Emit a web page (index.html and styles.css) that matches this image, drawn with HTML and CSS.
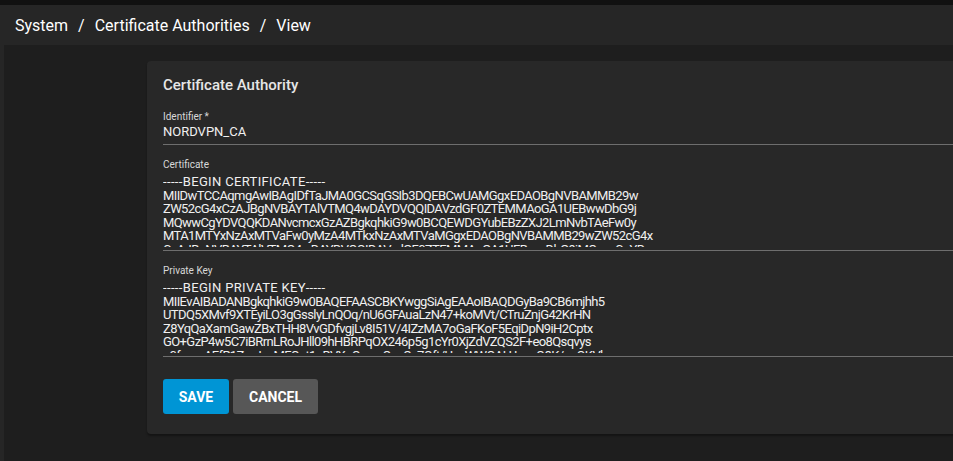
FILE: index.html
```html
<!DOCTYPE html>
<html>
<head>
<meta charset="utf-8">
<link rel="stylesheet" href="styles.css">
</head>
<body>
<div class="topstrip"></div>
<header class="header">
  <nav class="crumbs">
    <span>System</span><span class="sep">/</span><span>Certificate Authorities</span><span class="sep">/</span><span>View</span>
  </nav>
</header>
<div class="layout">
  <aside class="sidebar"></aside>
  <main class="main">
    <section class="card">
      <h1 class="title">Certificate Authority</h1>
      <div class="field">
        <div class="label">Identifier *</div>
        <div class="value">NORDVPN_CA</div>
      </div>
      <div class="field">
        <div class="label">Certificate</div>
        <div class="area"><span class="armor">-----BEGIN CERTIFICATE-----</span>
MIIDwTCCAqmgAwIBAgIDfTaJMA0GCSqGSIb3DQEBCwUAMGgxEDAOBgNVBAMMB29w
ZW52cG4xCzAJBgNVBAYTAlVTMQ4wDAYDVQQIDAVzdGF0ZTEMMAoGA1UEBwwDbG9j
MQwwCgYDVQQKDANvcmcxGzAZBgkqhkiG9w0BCQEWDGYubEBzZXJ2LmNvbTAeFw0y
MTA1MTYxNzAxMTVaFw0yMzA4MTkxNzAxMTVaMGgxEDAOBgNVBAMMB29wZW52cG4x
CzAJBgNVBAYTAlVTMQ4wDAYDVQQIDAVzdGF0ZTEMMAoGA1UEBwwDbG9jMQwwCgYD
VQQKDANvcmcxGzAZBgkqhkiG9w0BCQEWDGYubEBzZXJ2LmNvbTCCASIwDQYJKoZI</div>
      </div>
      <div class="field">
        <div class="label">Private Key</div>
        <div class="area"><span class="armor">-----BEGIN PRIVATE KEY-----</span>
MIIEvAIBADANBgkqhkiG9w0BAQEFAASCBKYwggSiAgEAAoIBAQDGyBa9CB6mjhh5
UTDQ5XMvf9XTEyiLO3gGsslyLnQOq/nU6GFAuaLzN47+koMVt/CTruZnjG42KrHN
Z8YqQaXamGawZBxTHH8VvGDfvgjLv8I51V/4IZzMA7oGaFKoF5EqiDpN9iH2Cptx
GO+GzP4w5C7iBRrnLRoJHll09hHBRPqOX246p5g1cYr0XjZdVZQS2F+eo8Qsqvys
a0fmnaAEfR1ZmJznMFOct1oBVXoQwoeQvnOv7Oft/UscWWQALUaepO8K/naOKVla
kQ2Bz7mS0Yp3LrT9cNwB4gX2uFhD8vJeA1sR6tKoZ+PqUiHjMbCdEfGyIl0nO5w</div>
      </div>
      <div class="actions">
        <button class="btn btn-primary">SAVE</button>
        <button class="btn btn-secondary">CANCEL</button>
      </div>
    </section>
  </main>
</div>
</body>
</html>
```
FILE: styles.css
```css
html, body {
  margin: 0;
  padding: 0;
  background: #1e1e1e;
  font-family: Roboto, "Liberation Sans", sans-serif;
  overflow: hidden;
  height: 100%;
}
.topstrip {
  height: 5px;
  background: #111111;
}
.header {
  height: 40px;
  background: #262626;
  display: flex;
  align-items: center;
  padding-left: 15px;
}
.crumbs {
  color: #ffffff;
  font-size: 16px;
  display: flex;
  align-items: center;
}
.crumbs .sep {
  margin: 0 10px 0 10px;
}
.layout {
  display: flex;
  height: 416px;
}
.sidebar {
  width: 4px;
  background: #262626;
  flex: none;
}
.main {
  flex: 1;
  padding: 16px 0 0 143px;
  min-width: 0;
}
.card {
  width: 900px;
  background: #282828;
  border-radius: 4px;
  padding: 14px 16px 20px 16px;
  box-shadow: 0 2px 2px rgba(0,0,0,0.35);
  display: flex;
  flex-direction: column;
}
.title {
  margin: 0;
  padding-bottom: 2px;
  font-size: 15px;
  font-weight: 500;
  line-height: 20px;
  color: #e6e6e6;
}
.field {
  margin-top: 14px;
  border-bottom: 1px solid #6e6e6e;
}
.label {
  font-size: 10px;
  line-height: 12px;
  color: #d8d8d8;
}
.value {
  font-size: 13px;
  line-height: 16px;
  color: #f0f0f0;
  padding: 1px 0 4px 0;
}
.area {
  font-size: 13px;
  letter-spacing: -0.6px;
  line-height: 13.5px;
  color: #f0f0f0;
  white-space: pre;
  overflow: hidden;
  height: 72px;
  margin: 4px 0 3px 0;
}
.armor {
  letter-spacing: 0.35px;
}
.actions {
  margin-top: 22px;
  display: flex;
  gap: 4px;
}
.btn {
  font-family: Roboto, "Liberation Sans", sans-serif;
  font-size: 14px;
  font-weight: 700;
  color: #ffffff;
  border: none;
  border-radius: 3px;
  height: 35px;
  padding: 0;
  flex: none;
}
.btn-primary {
  background: #0095d5;
  width: 66px;
}
.btn-secondary {
  background: #575757;
  width: 85px;
}
```
